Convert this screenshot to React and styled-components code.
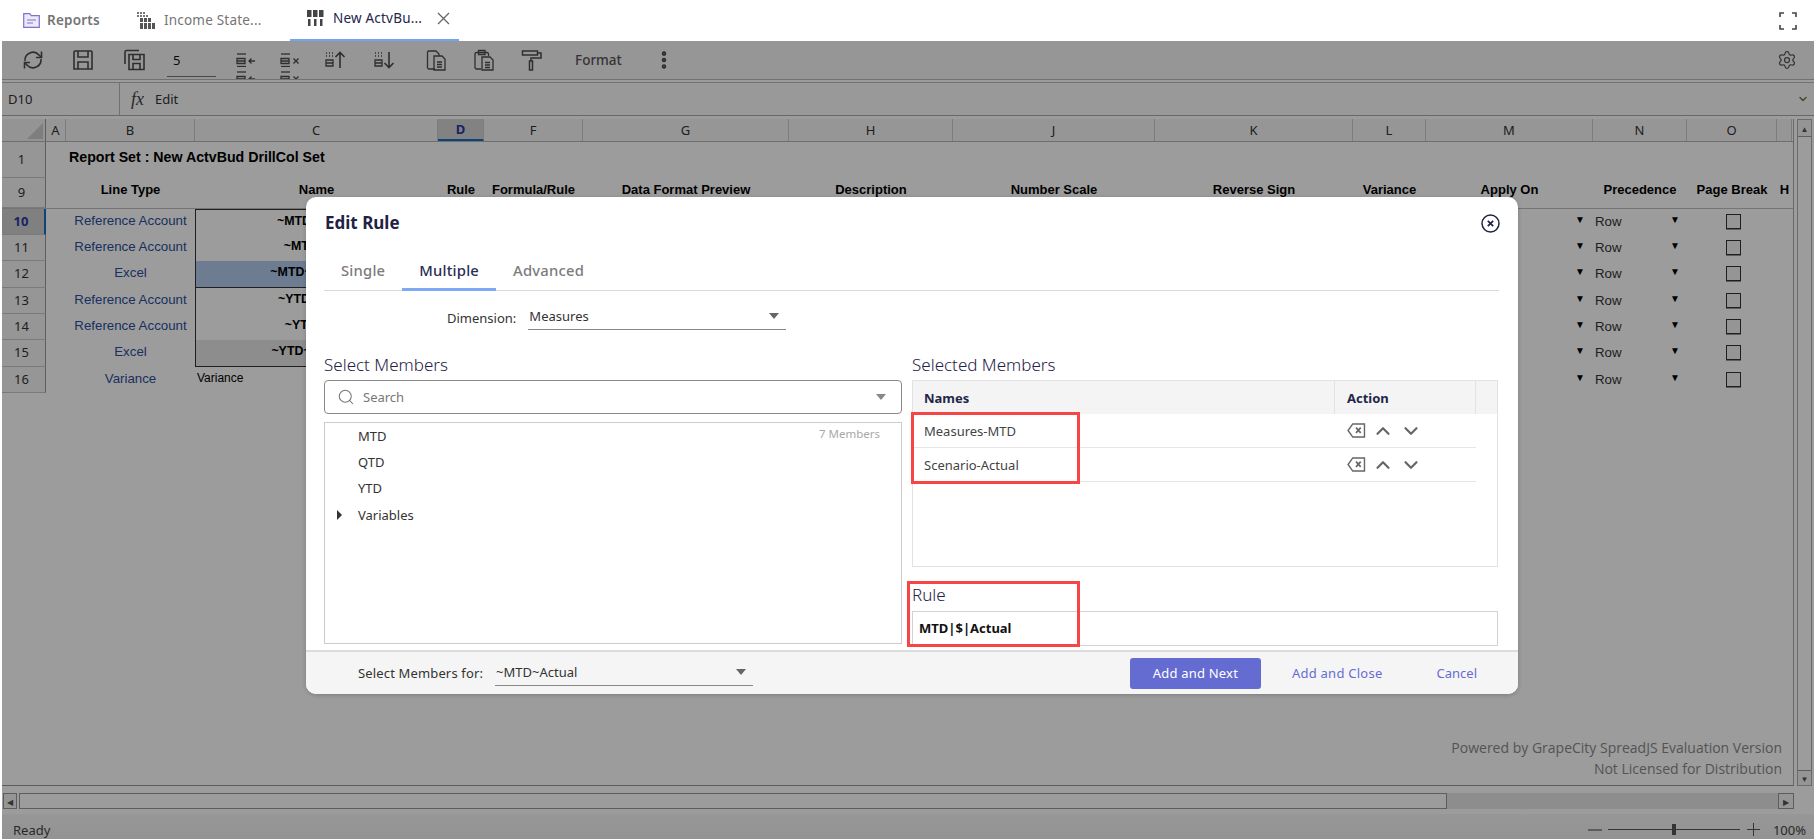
import React from 'react';
import styled, { createGlobalStyle } from 'styled-components';
import { ChevronUp, ChevronDown, Search, Settings, Ellipsis } from 'lucide-react';

const GlobalStyle = createGlobalStyle`
  html, body { margin: 0; padding: 0; background: #fff; }
  body { font-family: "Noto Sans", "Open Sans", sans-serif; overflow: hidden; }
  * { box-sizing: border-box; }
`;

const COLS = '44px 20px 129px 243px 46px 99px 206px 164px 202px 198px 73px 167px 94px 90px 15px';

const Page = styled.div`
  position: relative;
  width: 1814px;
  height: 839px;
  padding-left: 2px;
  background: #fff;
  overflow: hidden;
  display: flex;
  flex-direction: column;
`;

const TabBar = styled.div`
  height: 41px;
  flex: none;
  display: flex;
  align-items: stretch;
  padding-left: 21px;
  color: #1f2245;
`;

const Tab = styled.div`
  display: flex;
  align-items: center;
  gap: ${p => p.$gap || 7}px;
  width: ${p => p.$w}px;
  padding-left: ${p => p.$pl || 0}px;
  padding-bottom: ${p => (p.$active ? 3 : 1)}px;
  font-size: 13.5px;
  font-weight: ${p => (p.$bold ? 600 : 400)};
  color: ${p => (p.$active ? '#22264a' : '#757575')};
  border-bottom: ${p => (p.$active ? '2px solid #72a4f2' : 'none')};
  letter-spacing: 0.2px;
`;

const CloseGlyph = styled.svg`
  width: 15px;
  height: 15px;
  margin-left: 5px;
  stroke: #666;
  stroke-width: 1.3;
  fill: none;
`;

const FullScreen = styled.svg`
  margin-left: auto;
  margin-right: 17px;
  align-self: center;
  width: 18px;
  height: 18px;
  fill: none;
  stroke: #444;
  stroke-width: 1.6;
`;

const Toolbar = styled.div`
  height: 39px;
  flex: none;
  display: flex;
  align-items: center;
  padding-left: 6px;
  background: #f6f6f6;
  border-bottom: 1px solid #bbb;
  overflow: hidden;
`;

const ToolButton = styled.div`
  width: ${p => p.$w}px;
  flex: none;
  display: flex;
  justify-content: center;
  align-items: center;
  color: #4c4c4c;
`;

const StackButton = styled(ToolButton)`
  height: 39px;
  flex-direction: column;
  justify-content: flex-start;
  padding-top: 12px;
  gap: 4px;
`;

const CountInput = styled.div`
  width: 49px;
  height: 24px;
  margin-left: 7px;
  margin-right: 6px;
  margin-top: 9px;
  flex: none;
  padding-left: 6px;
  font-size: 13px;
  line-height: 15px;
  color: #111;
  border-bottom: 1px solid #777;
`;

const FormatLabel = styled.div`
  width: 45px;
  margin-left: 15px;
  flex: none;
  font-size: 13.5px;
  font-weight: 500;
  color: #555;
`;

const Kebab = styled.div`
  margin-left: 33px;
  display: flex;
  color: #4c4c4c;
`;

const GearSlot = styled.div`
  margin-left: auto;
  margin-right: 17px;
  display: flex;
  color: #555;
`;

const FormulaBar = styled.div`
  height: 34px;
  flex: none;
  margin-top: 2px;
  display: flex;
  align-items: center;
  background: #fbfbfb;
  border-top: 1px solid #bbb;
  border-bottom: 1px solid #aaa;
  font-size: 13px;
  color: #333;
`;

const NameBox = styled.div`
  width: 118px;
  height: 100%;
  padding-left: 6px;
  display: flex;
  align-items: center;
  border-right: 1px solid #bbb;
`;

const FxLabel = styled.span`
  margin-left: 11px;
  font-family: "Liberation Serif", serif;
  font-style: italic;
  font-size: 18px;
  color: #444;
`;

const FormulaText = styled.span`
  margin-left: 11px;
`;

const FormulaCaret = styled.div`
  margin-left: auto;
  margin-right: 5px;
  display: flex;
  color: #6a7a3a;
`;

const Workspace = styled.div`
  flex: 1;
  min-height: 0;
  display: flex;
  padding-top: 3px;
  background: #fff;
`;

const Sheet = styled.div`
  flex: none;
  width: 1792px;
  display: flex;
  flex-direction: column;
  border-bottom: 1px solid #999;
  border-right: 1px solid #aaa;
`;

const Row = styled.div`
  display: grid;
  grid-template-columns: ${COLS};
  height: ${p => p.$h}px;
  flex: none;
  font-family: "Liberation Sans", Arial, sans-serif;
  font-size: 13px;
`;

const HeaderRow = styled(Row)`
  font-family: "Noto Sans", sans-serif;
  border-bottom: 1px solid #b5b5b5;
`;

const TitleRow = styled(Row)`
  border-bottom: 1px solid #c0c0c0;
`;

const Corner = styled.div`
  position: relative;
  background: #f2f2f2;
  border-right: 1px solid #999;

  &::after {
    content: '';
    position: absolute;
    right: 2px;
    bottom: 2px;
    border-style: solid;
    border-width: 0 0 16px 16px;
    border-color: transparent transparent #cfcfcf transparent;
  }
`;

const ColCell = styled.div`
  display: flex;
  align-items: center;
  justify-content: center;
  font-size: 13px;
  font-weight: ${p => (p.$active ? 700 : 400)};
  color: ${p => (p.$active ? '#2b3aa0' : '#333')};
  background: ${p => (p.$active ? '#d4d4d4' : '#f5f5f5')};
  border-right: 1px solid #ccc;
  border-bottom: ${p => (p.$active ? '2px solid #1a6fc9' : 'none')};
`;

const RowHead = styled.div`
  display: flex;
  align-items: center;
  justify-content: center;
  padding-right: 4px;
  padding-bottom: 2px;
  font-family: "Noto Sans", sans-serif;
  font-size: 13px;
  font-weight: ${p => (p.$active ? 700 : 400)};
  color: ${p => (p.$active ? '#2b3aa0' : '#333')};
  background: ${p => (p.$active ? '#d2d2d2' : '#f5f5f5')};
  border-right: ${p => (p.$active ? '2px solid #1a6fc9' : '1px solid #999')};
  border-bottom: 1px solid #c8c8c8;
`;

const Cell = styled.div`
  display: flex;
  align-items: center;
  min-width: 0;
  white-space: nowrap;
  padding-bottom: 4px;
  justify-content: ${p => p.$align || 'center'};
`;

const SheetTitle = styled(Cell)`
  grid-column: 3 / 5;
  justify-content: flex-start;
  padding-left: 3px;
  padding-bottom: 6px;
  font-size: 14.2px;
  font-weight: 700;
  color: #000;
`;

const ColTitle = styled(Cell)`
  padding-bottom: 7px;
  font-weight: 700;
  font-size: 13px;
  color: #000;
  overflow: hidden;
`;

const LinkCell = styled(Cell)`
  color: #2c4f9c;
  font-size: 13.3px;
`;

const NameCell = styled(Cell)`
  font-size: 12.4px;
  font-weight: 700;
  color: #000;
  background: ${p => p.$bg || 'transparent'};
  border-left: 1px solid #333;
  border-right: 1px solid #333;
  border-top: ${p => (p.$top ? '1px solid #333' : 'none')};
  border-bottom: ${p => (p.$bottom ? '1px solid #333' : 'none')};
`;

const PlainCell = styled(Cell)`
  justify-content: flex-start;
  padding-left: 2px;
  font-size: 12px;
  color: #000;
`;

const CaretEnd = styled(Cell)`
  justify-content: flex-end;
  padding-right: 8px;
  padding-bottom: 6px;
  font-size: 10px;
  color: #000;
`;

const RowSelect = styled(Cell)`
  justify-content: space-between;
  padding: 0 7px 2px 2px;
  font-size: 13.3px;
  color: #333;
`;

const TinyCaret = styled.span`
  font-size: 10px;
  color: #000;
  padding-bottom: 4px;
`;

const CheckCell = styled(Cell)`
  padding: 0 0 2px 2px;
`;

const CheckBox = styled.span`
  width: 15px;
  height: 15px;
  border: 1px solid #333;
  background: #f4f4f4;
  box-shadow: 0 1px 0 #999;
`;

const Watermark = styled.div`
  margin-top: auto;
  padding: 0 11px 6px 0;
  text-align: right;
  font-family: "Open Sans", sans-serif;
  font-size: 14px;
  line-height: 21px;
  color: #8a8a8a;
`;

const VScroll = styled.div`
  flex: 1;
  padding-left: 3px;
  padding-top: 0;
  padding-bottom: 2px;
  height: 669px;
`;

const VTrack = styled.div`
  width: 15px;
  height: 100%;
  display: flex;
  flex-direction: column;
  justify-content: space-between;
  background: #fff;
  border: 1px solid #b0b0b0;
`;

const ScrollBtn = styled.div`
  width: ${p => p.$w || '100%'};
  height: ${p => p.$h || '15px'};
  flex: none;
  display: flex;
  align-items: center;
  justify-content: center;
  font-size: 8px;
  color: #555;
  background: #f4f4f4;
  border: ${p => (p.$bordered ? '1px solid #999' : 'none')};
`;

const VBtn = styled(ScrollBtn)`
  border-top: ${p => (p.$down ? '1px solid #999' : 'none')};
  border-bottom: ${p => (p.$down ? 'none' : '1px solid #999')};
`;

const HScroll = styled.div`
  height: 28px;
  flex: none;
  padding: 7px 0 0 1px;
  display: flex;
  width: 1792px;
  align-items: flex-start;
  background: #fff;
`;

const HThumb = styled.div`
  width: 1428px;
  height: 16px;
  margin-left: 2px;
  background: #fff;
  border: 1px solid #999;
`;

const HTrack = styled.div`
  flex: 1;
  height: 16px;
  background: #e6e6e6;
`;

const StatusBar = styled.div`
  height: 25px;
  flex: none;
  display: flex;
  align-items: center;
  padding: 6px 8px 0 11px;
  font-size: 13px;
  color: #444;
  background: linear-gradient(#f7f7f7, #f0f0f0);
`;

const ZoomArea = styled.div`
  margin-left: auto;
  display: flex;
  align-items: center;
`;

const ZoomDash = styled.span`
  width: 14px;
  height: 2px;
  background: #999;
`;

const ZoomTrack = styled.span`
  position: relative;
  display: block;
  width: 132px;
  height: 1px;
  margin: 0 7px 0 6px;
  background: #555;
`;

const ZoomThumb = styled.span`
  position: absolute;
  left: 64px;
  top: -5px;
  width: 4px;
  height: 11px;
  background: #555;
`;

const ZoomPlus = styled.span`
  position: relative;
  width: 13px;
  height: 13px;
  background:
    linear-gradient(#555, #555) center / 13px 1px no-repeat,
    linear-gradient(#555, #555) center / 1px 13px no-repeat;
`;

const ZoomValue = styled.span`
  margin-left: 13px;
  font-size: 13px;
`;

const Overlay = styled.div`
  position: absolute;
  left: 2px;
  right: 0;
  top: 41px;
  bottom: 0;
  background: rgba(0, 0, 0, 0.39);
`;

const Modal = styled.div`
  position: absolute;
  left: 306px;
  top: 197px;
  width: 1212px;
  height: 497px;
  display: flex;
  flex-direction: column;
  background: #fff;
  border-radius: 10px;
  box-shadow: 0 1px 4px rgba(0, 0, 0, 0.2);
  overflow: hidden;
  color: #1f2245;
`;

const ModalHead = styled.div`
  height: 52px;
  flex: none;
  display: flex;
  align-items: center;
  justify-content: space-between;
  padding: 0 18px 2px 19px;
  font-size: 17px;
  font-weight: 700;
`;

const CloseCircleIcon = styled.svg`
  margin-top: 3px;
  fill: none;
  stroke: #1f2245;
`;

const ModalTabs = styled.div`
  height: 42px;
  flex: none;
  display: flex;
  margin: 0 19px 0 18px;
  border-bottom: 1px solid #d9d9d9;
`;

const ModalTab = styled.div`
  padding: 3px 17px 0;
  display: flex;
  align-items: center;
  font-size: 14.8px;
  font-weight: 500;
  letter-spacing: 0.2px;
  color: ${p => (p.$active ? '#2a2d55' : '#7b7b7b')};
  border-bottom: ${p => (p.$active ? '3px solid #7eaaf5' : '3px solid transparent')};
  margin-bottom: -1px;
`;

const DimensionRow = styled.div`
  display: flex;
  align-items: flex-end;
  margin-top: 14px;
  padding-left: 141px;
  gap: 12px;
  flex: none;
`;

const FieldLabel = styled.span`
  font-size: 13px;
  color: #333;
  line-height: 24px;
`;

const FooterLabel = styled(FieldLabel)`
  letter-spacing: 0.15px;
  margin-right: 1px;
`;

const DropSelect = styled.div`
  width: 258px;
  height: 25px;
  display: flex;
  align-items: center;
  justify-content: space-between;
  padding: 0 7px 2px 1px;
  font-size: 13px;
  color: #333;
  border-bottom: 1px solid #888;
`;

const SolidCaret = styled.span`
  width: 0;
  height: 0;
  border-left: 5.5px solid transparent;
  border-right: 5.5px solid transparent;
  border-top: 6px solid #666;
`;

const Columns = styled.div`
  display: grid;
  grid-template-columns: 578px 586px;
  column-gap: 10px;
  margin: 23px 0 0 18px;
`;

const Column = styled.div`
  display: flex;
  flex-direction: column;
`;

const SectionTitle = styled.div`
  height: 27px;
  font-size: 17px;
  font-weight: 300;
  line-height: 24px;
  color: #1f2245;
`;

const SearchBox = styled.div`
  height: 34px;
  display: flex;
  align-items: center;
  padding: 0 15px 0 12px;
  border: 1px solid #8a8a8a;
  border-radius: 4px;
  font-size: 13px;
  color: #777;
  gap: 8px;
`;

const SearchCaret = styled(SolidCaret)`
  margin-left: auto;
  border-top-color: #888;
`;

const TreeBox = styled.div`
  height: 222px;
  margin-top: 8px;
  border: 1px solid #ccc;
  position: relative;
`;

const TreeItem = styled.div`
  height: 26.2px;
  display: flex;
  align-items: center;
  padding-left: 33px;
  font-size: 13px;
  color: #333;
  position: relative;
`;

const TreeArrow = styled.span`
  position: absolute;
  left: 12px;
  top: 8px;
  width: 0;
  height: 0;
  border-top: 5px solid transparent;
  border-bottom: 5px solid transparent;
  border-left: 5.5px solid #333;
`;

const MemberCount = styled.span`
  position: absolute;
  top: 1px;
  right: 21px;
  font-size: 11.5px;
  line-height: 20px;
  color: #a8a8a8;
`;

const MembersTable = styled.div`
  height: 187px;
  border: 1px solid #e2e2e2;
`;

const TableRow = styled.div`
  display: grid;
  grid-template-columns: 422px 141px 21px;
  height: ${p => p.$h}px;
  align-items: stretch;
  background: ${p => (p.$head ? '#f4f4f4' : 'transparent')};
`;

const HeadCell = styled.div`
  display: flex;
  align-items: center;
  padding-left: ${p => p.$pl || 11}px;
  font-size: 13px;
  font-weight: 700;
  color: #22264a;
  border-right: 1px solid #e2e2e2;
`;

const NameText = styled.div`
  display: flex;
  align-items: center;
  padding-left: 11px;
  font-size: 13px;
  color: #444;
  border-bottom: 1px solid #e6e6e6;
`;

const ActionCell = styled.div`
  display: flex;
  align-items: center;
  padding-left: 12px;
  gap: 6px;
  color: #666;
  border-bottom: 1px solid #e6e6e6;
`;

const RuleTitle = styled(SectionTitle)`
  margin-top: 15px;
  height: 29px;
  line-height: 26px;
`;

const RuleBox = styled.div`
  height: 35px;
  display: flex;
  align-items: center;
  padding: 0 0 2px 6px;
  font-size: 13px;
  font-weight: 700;
  color: #111;
  border: 1px solid #d2d2d2;
`;

const Footer = styled.div`
  height: 44px;
  margin-top: auto;
  flex: none;
  display: flex;
  align-items: center;
  padding: 0 41px 0 52px;
  gap: 11px;
  background: #f5f5f5;
  border-top: 2px solid #dcdcdc;
`;

const FooterActions = styled.div`
  margin-left: auto;
  display: flex;
  align-items: center;
`;

const PrimaryButton = styled.div`
  width: 131px;
  height: 31px;
  display: flex;
  align-items: center;
  justify-content: center;
  font-size: 13px;
  letter-spacing: 0.2px;
  color: #fff;
  background: #646bd1;
  border-radius: 3px;
`;

const LinkButton = styled.div`
  margin-left: ${p => p.$ml}px;
  font-size: 13px;
  letter-spacing: ${p => p.$ls || 0}px;
  color: #666cd4;
`;

const RedBox = styled.div`
  position: absolute;
  left: ${p => p.$x}px;
  top: ${p => p.$y}px;
  width: ${p => p.$w}px;
  height: ${p => p.$h}px;
  border: 3px solid #f54545;
  pointer-events: none;
`;

const Ico = styled.svg`
  width: ${p => p.$s || 22}px;
  height: ${p => p.$h || p.$s || 22}px;
  flex: none;
  fill: none;
  stroke: currentColor;
  stroke-width: ${p => p.$sw || 1.6};
`;

const TabIcon = styled.svg`
  flex: none;
`;

const ReportsIcon = () => (
  <TabIcon width="17" height="15" viewBox="0 0 17 15">
    <path d="M.7.7h6l1.6 2h8v11.6H.7z" fill="#ece9fa" stroke="#7d74c9" strokeWidth="1.2" />
    <path d="M4 7h9M4 10h6" stroke="#7d74c9" strokeWidth="1.2" />
  </TabIcon>
);

const IncomeIcon = () => (
  <TabIcon width="18" height="17" viewBox="0 0 18 17" fill="#555">
    <path d="M0 0h2v2H0zM3 0h2v2H3zM6 0h2v2H6zM0 3h2v2H0zM3 3h2v2H3zM6 3h2v2H6zM9 3h2v2H9z" fill="#777" />
    <path d="M3 6h3v4H3zM7 6h3v4H7zM11 6h3v4h-3zM3 11h3v6H3zM7 11h3v6H7zM11 11h3v6h-3zM15 11h3v6h-3z" />
  </TabIcon>
);

const ActiveSheetIcon = () => (
  <TabIcon width="17" height="16" viewBox="0 0 17 16" fill="#444">
    <path d="M0 0h4.500v7H0zM6 0h4.500v7H6zM12 0h4.500v7H12z" />
    <path d="M1 9h2.500v7H1zM7 9h2.500v7H7zM13 9h2.500v7H13z" />
  </TabIcon>
);

const RefreshIcon = () => (
  <Ico viewBox="0 0 22 22">
    <path d="M3 12a8 8 0 0 1 14-6l2 2M19 10a8 8 0 0 1-14 6l-2-2" />
    <path d="M19.500 2.500V8.500h-5.500M2.500 19.500V13.500h5.500" />
  </Ico>
);

const SaveIcon = () => (
  <Ico viewBox="0 0 22 22">
    <path d="M2 3a1 1 0 0 1 1-1h16a1 1 0 0 1 1 1v17H2z" />
    <path d="M6 2v6h10V2M6 20v-7h10v7" />
  </Ico>
);

const SaveAllIcon = () => (
  <Ico viewBox="0 0 22 22">
    <path d="M2 15V3a1.500 1.500 0 0 1 1.500-1.500H16" />
    <path d="M6 5.500h15v15H6z" />
    <path d="M10 5.500v5h7v-5M10 20.500v-6h7v6" />
  </Ico>
);

const RowOp = ({ mark }) => (
  <Ico viewBox="0 0 22 14" $h={14} $sw={1.3}>
    <path d="M3 1h9" />
    <path d="M3 5.500h8v5H3zM3 8h8" />
    <path d="M3 13.500h9" />
    {mark === 'add' ? <path d="M21 8h-6M17.500 5.500 15 8l2.500 2.500" /> : <path d="M15.500 5.500l5 5M20.500 5.500l-5 5" />}
  </Ico>
);

const MoveIcon = ({ down }) => (
  <Ico viewBox="0 0 24 20" $s={24} $h={20}>
    <path d="M2 3h1M5 3h1M8 3h1M2 6h1M5 6h1M8 6h1" />
    <path d="M2 10h7v6H2zM2 13h7" strokeWidth="1.300" />
    {down ? <path d="M16 2v15M11.500 13l4.500 4.500 4.500-4.500" /> : <path d="M16 18V3M11.500 7 16 2.500 20.500 7" />}
  </Ico>
);

const CopyDocIcon = () => (
  <Ico viewBox="0 0 22 22" $sw={1.3}>
    <path d="M10 20H4a1.500 1.500 0 0 1-1.500-1.500v-15A1.500 1.500 0 0 1 4 2h7l3 3v2" />
    <path d="M9 7h8l3 3v11H9z" />
    <path d="M12 13h5M12 15.500h5M12 18h5" />
  </Ico>
);

const PasteIcon = () => (
  <Ico viewBox="0 0 22 22" $sw={1.3}>
    <path d="M8 20H3.500A1.500 1.500 0 0 1 2 18.500V5a1.500 1.500 0 0 1 1.500-1.500H14A1.500 1.500 0 0 1 15.500 5v2" />
    <path d="M5.500 1.500h6.500v4H5.500z" />
    <path d="M9 8h8l3 3v10H9z" />
    <path d="M12 13.500h5M12 16h5M12 18.500h5" />
  </Ico>
);

const RollerIcon = () => (
  <Ico viewBox="0 0 22 22" $sw={1.5}>
    <path d="M1.500 2h15v4h-15z" />
    <path d="M16.500 4h3.500v5H10v3" />
    <path d="M8.500 12h3v9h-3z" />
  </Ico>
);

const BackspaceIcon = () => (
  <Ico viewBox="0 0 20 16" $s={19} $h={15} $sw={1.5}>
    <path d="M6 1h12.500v14H6L1 8z" />
    <path d="M9.500 5l5 5.500M14.500 5l-5 5.500" strokeWidth="1.800" />
  </Ico>
);

const CloseCircle = () => (
  <CloseCircleIcon width="19" height="19" viewBox="0 0 19 19">
    <circle cx="9.500" cy="9.500" r="8.500" strokeWidth="1.500" />
    <path d="M6.800 6.800l5.400 5.400M12.200 6.800l-5.400 5.400" strokeWidth="1.700" />
  </CloseCircleIcon>
);

const COL_LABELS = ['A', 'B', 'C', 'D', 'F', 'G', 'H', 'J', 'K', 'L', 'M', 'N', 'O', ''];
const COL_TITLES = ['', 'Line Type', 'Name', 'Rule', 'Formula/Rule', 'Data Format Preview', 'Description', 'Number Scale', 'Reverse Sign', 'Variance', 'Apply On', 'Precedence', 'Page Break', 'H'];

const DATA_ROWS = [
  { num: 10, h: 26, type: 'Reference Account', name: '~MTD~Actual', active: true, top: true },
  { num: 11, h: 26, type: 'Reference Account', name: '~MTD~Bud' },
  { num: 12, h: 27, type: 'Excel', name: '~MTD~Variance', bg: '#b2cbed', bottom: true },
  { num: 13, h: 26, type: 'Reference Account', name: '~YTD~Actual' },
  { num: 14, h: 26, type: 'Reference Account', name: '~YTD~Bud' },
  { num: 15, h: 27, type: 'Excel', name: '~YTD~Variance', bg: '#e6e6e6', bottom: true },
  { num: 16, h: 26, type: 'Variance', plain: 'Variance' },
];

const MEMBERS = ['Measures-MTD', 'Scenario-Actual'];

export default function App() {
  return (
    <Page>
      <GlobalStyle />
      <TabBar>
        <Tab $w={114} $bold>
          <ReportsIcon />
          Reports
        </Tab>
        <Tab $w={153} $gap={9}>
          <IncomeIcon />
          Income State...
        </Tab>
        <Tab $w={169} $pl={17} $gap={9} $active>
          <ActiveSheetIcon />
          New ActvBu...
          <CloseGlyph viewBox="0 0 15 15"><path d="M2 2l11 11M13 2 2 13" /></CloseGlyph>
        </Tab>
        <FullScreen viewBox="0 0 18 18">
          <path d="M1 5V1h4M13 1h4v4M17 13v4h-4M5 17H1v-4" />
        </FullScreen>
      </TabBar>

      <Toolbar>
        <ToolButton $w={50}><RefreshIcon /></ToolButton>
        <ToolButton $w={50}><SaveIcon /></ToolButton>
        <ToolButton $w={52}><SaveAllIcon /></ToolButton>
        <CountInput>5</CountInput>
        <StackButton $w={46}><RowOp mark="add" /><RowOp mark="add" /></StackButton>
        <StackButton $w={42}><RowOp mark="del" /><RowOp mark="del" /></StackButton>
        <ToolButton $w={52}><MoveIcon /></ToolButton>
        <ToolButton $w={46}><MoveIcon down /></ToolButton>
        <ToolButton $w={56}><CopyDocIcon /></ToolButton>
        <ToolButton $w={40}><PasteIcon /></ToolButton>
        <ToolButton $w={56}><RollerIcon /></ToolButton>
        <FormatLabel>Format</FormatLabel>
        <Kebab><Ellipsis size={22} style={{ transform: 'rotate(90deg)' }} strokeWidth={3} /></Kebab>
        <GearSlot><Settings size={20} strokeWidth={1.5} /></GearSlot>
      </Toolbar>

      <FormulaBar>
        <NameBox>D10</NameBox>
        <FxLabel>fx</FxLabel>
        <FormulaText>Edit</FormulaText>
        <FormulaCaret><ChevronDown size={12} strokeWidth={3} /></FormulaCaret>
      </FormulaBar>

      <Workspace>
        <Sheet>
          <HeaderRow $h={23}>
            <Corner />
            {COL_LABELS.map((label, i) => (
              <ColCell key={i} $active={label === 'D'}>{label}</ColCell>
            ))}
          </HeaderRow>
          <Row $h={36}>
            <RowHead>1</RowHead>
            <Cell />
            <SheetTitle>Report Set : New ActvBud DrillCol Set</SheetTitle>
          </Row>
          <TitleRow $h={31}>
            <RowHead>9</RowHead>
            {COL_TITLES.map((title, i) => <ColTitle key={i}>{title}</ColTitle>)}
          </TitleRow>
          {DATA_ROWS.map(row => (
            <Row key={row.num} $h={row.h}>
              <RowHead $active={row.active}>{row.num}</RowHead>
              <Cell />
              <LinkCell>{row.type}</LinkCell>
              {row.plain
                ? <PlainCell>{row.plain}</PlainCell>
                : <NameCell $bg={row.bg} $top={row.top} $bottom={row.bottom}>{row.name}</NameCell>}
              <Cell /><Cell /><Cell /><Cell /><Cell /><Cell /><Cell />
              <CaretEnd>▼</CaretEnd>
              <RowSelect>Row<TinyCaret>▼</TinyCaret></RowSelect>
              <CheckCell><CheckBox /></CheckCell>
              <Cell />
            </Row>
          ))}
          <Watermark>
            <div>Powered by GrapeCity SpreadJS Evaluation Version</div>
            <div>Not Licensed for Distribution</div>
          </Watermark>
        </Sheet>
        <VScroll>
          <VTrack>
            <VBtn $h="17px">▲</VBtn>
            <VBtn $down>▼</VBtn>
          </VTrack>
        </VScroll>
      </Workspace>

      <HScroll>
        <ScrollBtn $w="14px" $h="16px" $bordered>◀</ScrollBtn>
        <HThumb />
        <HTrack />
        <ScrollBtn $w="16px" $h="16px" $bordered>▶</ScrollBtn>
      </HScroll>

      <StatusBar>
        Ready
        <ZoomArea>
          <ZoomDash />
          <ZoomTrack><ZoomThumb /></ZoomTrack>
          <ZoomPlus />
          <ZoomValue>100%</ZoomValue>
        </ZoomArea>
      </StatusBar>

      <Overlay />

      <Modal>
        <ModalHead>Edit Rule<CloseCircle /></ModalHead>
        <ModalTabs>
          <ModalTab>Single</ModalTab>
          <ModalTab $active>Multiple</ModalTab>
          <ModalTab>Advanced</ModalTab>
        </ModalTabs>
        <DimensionRow>
          <FieldLabel>Dimension:</FieldLabel>
          <DropSelect>Measures<SolidCaret /></DropSelect>
        </DimensionRow>
        <Columns>
          <Column>
            <SectionTitle>Select Members</SectionTitle>
            <SearchBox>
              <Search size={18} strokeWidth={1.4} color="#777" />
              Search
              <SearchCaret />
            </SearchBox>
            <TreeBox>
              <MemberCount>7 Members</MemberCount>
              <TreeItem>MTD</TreeItem>
              <TreeItem>QTD</TreeItem>
              <TreeItem>YTD</TreeItem>
              <TreeItem><TreeArrow />Variables</TreeItem>
            </TreeBox>
          </Column>
          <Column>
            <SectionTitle>Selected Members</SectionTitle>
            <MembersTable>
              <TableRow $h={33} $head>
                <HeadCell>Names</HeadCell>
                <HeadCell $pl={12}>Action</HeadCell>
                <div />
              </TableRow>
              {MEMBERS.map(member => (
                <TableRow key={member} $h={34}>
                  <NameText>{member}</NameText>
                  <ActionCell>
                    <BackspaceIcon />
                    <ChevronUp size={22} strokeWidth={2.4} />
                    <ChevronDown size={22} strokeWidth={2.4} />
                  </ActionCell>
                </TableRow>
              ))}
            </MembersTable>
            <RuleTitle>Rule</RuleTitle>
            <RuleBox>MTD|$|Actual</RuleBox>
          </Column>
        </Columns>
        <Footer>
          <FooterLabel>Select Members for:</FooterLabel>
          <DropSelect>~MTD~Actual<SolidCaret /></DropSelect>
          <FooterActions>
            <PrimaryButton>Add and Next</PrimaryButton>
            <LinkButton $ml={31} $ls={0.25}>Add and Close</LinkButton>
            <LinkButton $ml={54}>Cancel</LinkButton>
          </FooterActions>
        </Footer>
        <RedBox $x={605} $y={215} $w={169} $h={72} />
        <RedBox $x={601} $y={384} $w={173} $h={66} />
      </Modal>
    </Page>
  );
}
